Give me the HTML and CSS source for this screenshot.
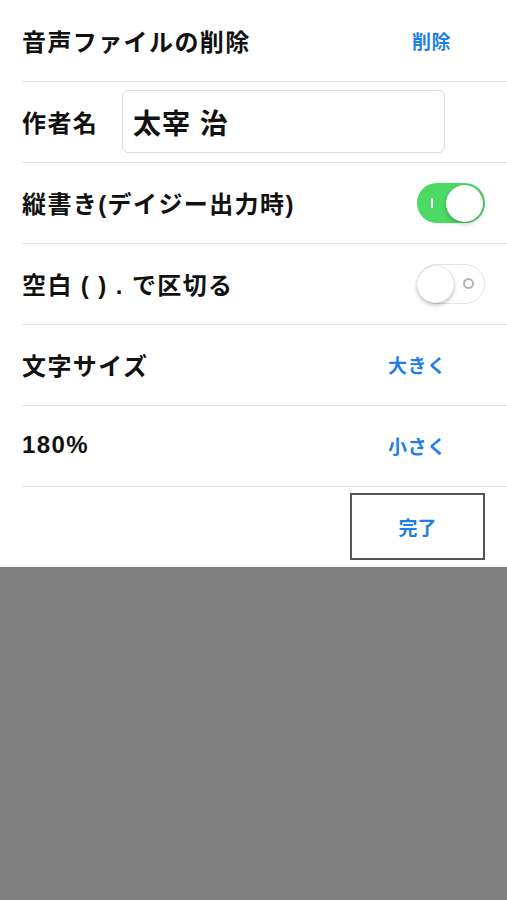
FILE: index.html
```html
<!DOCTYPE html>
<html lang="ja">
<head>
<meta charset="utf-8">
<link rel="stylesheet" href="styles.css">
</head>
<body>
<div class="panel">
  <div class="row">
    <span class="label">音声ファイルの削除</span>
    <span class="action action-del">削除</span>
  </div>
  <div class="row">
    <span class="label">作者名</span>
    <div class="input">太宰 治</div>
  </div>
  <div class="row">
    <span class="label">縦書き(デイジー出力時)</span>
    <div class="switch on"><span class="mark-on"></span><span class="knob"></span></div>
  </div>
  <div class="row">
    <span class="label">空白 ( ) . で区切る</span>
    <div class="switch off"><span class="knob"></span><span class="mark-off"></span></div>
  </div>
  <div class="row">
    <span class="label">文字サイズ</span>
    <span class="action">大きく</span>
  </div>
  <div class="row">
    <span class="label">180%</span>
    <span class="action">小さく</span>
  </div>
  <div class="footer">
    <div class="done">完了</div>
  </div>
</div>
<div class="shade"></div>
</body>
</html>
```

FILE: styles.css
```css
html, body {
  margin: 0;
  padding: 0;
  background: #ffffff;
}
body {
  font-family: "Liberation Sans", "Noto Sans CJK JP", sans-serif;
  color: #111;
  width: 507px;
  height: 900px;
  display: flex;
  flex-direction: column;
}
.panel {
  padding-left: 22px;
  padding-top: 1px;
  background: #fff;
}
.row {
  height: 80px;
  border-bottom: 1px solid #e3e3e3;
  display: flex;
  align-items: center;
  position: relative;
}
.label {
  font-size: 24px;
  font-weight: 700;
  letter-spacing: 1.4px;
  flex: 1;
  margin-top: -2px;
}
.action {
  color: #1f7fe6;
  font-size: 19px;
  font-weight: 700;
  letter-spacing: 0.5px;
  width: 119px;
  margin-top: -2px;
}
.action-del {
  width: 95px;
}
.input {
  position: absolute;
  left: 100px;
  top: 8px;
  width: 323px;
  height: 63px;
  border: 1px solid #dcdcdc;
  border-radius: 6px;
  box-sizing: border-box;
  padding-left: 10px;
  display: flex;
  align-items: center;
  font-size: 28px;
  font-weight: 700;
  letter-spacing: 1px;
}
.switch {
  width: 68px;
  height: 40px;
  border-radius: 20px;
  box-sizing: border-box;
  margin-right: 22px;
  display: flex;
  align-items: center;
  position: relative;
}
.switch.on {
  background: #4cd964;
  justify-content: flex-end;
}
.switch.off {
  background: #fff;
  border: 1.5px solid #e2e2e2;
}
.knob {
  width: 37px;
  height: 37px;
  border-radius: 50%;
  background: #fff;
  box-shadow: 0 2px 4px rgba(0,0,0,0.25), 0 0 1px rgba(0,0,0,0.2);
  margin: 0 2px;
}
.switch.off .knob {
  margin-left: -1px;
}
.mark-on {
  position: absolute;
  left: 14px;
  top: 15px;
  width: 2px;
  height: 10px;
  background: #fff;
  border-radius: 1px;
}
.mark-off {
  position: absolute;
  right: 10px;
  top: 13px;
  width: 11px;
  height: 11px;
  box-sizing: border-box;
  border: 2px solid #b5b5b5;
  border-radius: 50%;
}
.footer {
  height: 80px;
  display: flex;
  justify-content: flex-end;
  align-items: flex-start;
  padding-top: 6px;
  box-sizing: border-box;
}
.done {
  width: 135px;
  height: 67px;
  border: 2px solid #555;
  box-sizing: border-box;
  margin-right: 22px;
  display: flex;
  align-items: center;
  justify-content: center;
  color: #1f7fe6;
  font-size: 19px;
  font-weight: 700;
}
.shade {
  flex: 1;
  background: #808080;
}
```
